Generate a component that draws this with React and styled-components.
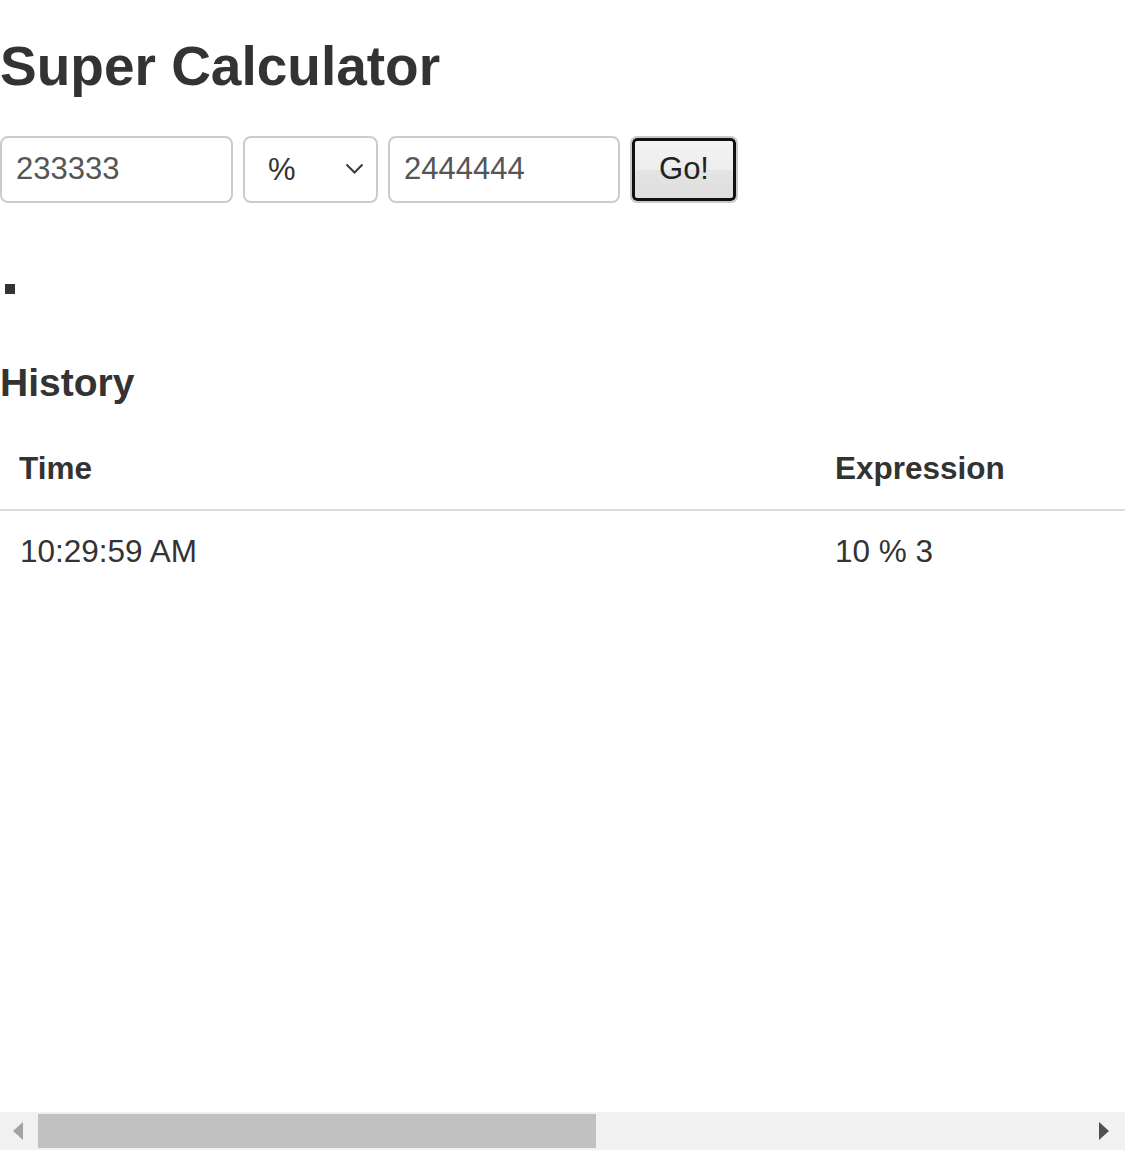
import React from "react";
import styled, { createGlobalStyle } from "styled-components";

const GlobalStyle = createGlobalStyle`
  html, body {
    margin: 0;
    padding: 0;
    background: #fff;
  }
  body {
    font-family: "Liberation Sans", Arial, "Helvetica Neue", sans-serif;
    color: #333;
  }
`;

const Page = styled.div`
  box-sizing: border-box;
  padding-bottom: 40px;
`;

const Title = styled.h1`
  font-size: 55px;
  font-weight: 700;
  line-height: 1.1;
  color: #333;
  margin: 36px 0 39px;
`;

const CalcForm = styled.form`
  display: flex;
  align-items: stretch;
  gap: 10px;
  height: 67px;
`;

const NumberInput = styled.input`
  box-sizing: border-box;
  width: ${(p) => p.$w}px;
  height: 67px;
  margin: 0;
  border: 2px solid #cccccc;
  border-radius: 8px;
  padding: 0 14px;
  font-family: "Liberation Sans", Arial, sans-serif;
  font-size: 31px;
  color: #555;
  background: #fff;
  outline: none;
`;

const SelectWrap = styled.div`
  position: relative;
  width: 135px;
  height: 67px;
`;

const OperatorSelect = styled.select`
  appearance: none;
  -webkit-appearance: none;
  box-sizing: border-box;
  width: 100%;
  height: 100%;
  margin: 0;
  border: 2px solid #cccccc;
  border-radius: 8px;
  padding: 0 0 0 23px;
  font-family: "Liberation Sans", Arial, sans-serif;
  font-size: 31px;
  color: #333;
  background: #fff;
  outline: none;
`;

const Chevron = styled.svg`
  position: absolute;
  left: 102px;
  top: 27px;
  width: 19px;
  height: 11px;
  pointer-events: none;
`;

const GoButton = styled.button`
  box-sizing: border-box;
  width: 108px;
  height: 67px;
  margin: 0;
  border: 2px solid #c9c9c9;
  border-radius: 7px;
  box-shadow: inset 0 0 0 3px #111;
  background: linear-gradient(
    to bottom,
    #f5f5f5 0%,
    #ededed 50%,
    #e4e4e4 50%,
    #dedede 100%
  );
  font-family: "Liberation Sans", Arial, sans-serif;
  font-size: 31px;
  color: #222;
  padding: 0;
  cursor: pointer;
`;

const ResultMark = styled.div`
  width: 10px;
  height: 10px;
  background: #333;
  margin: 81px 0 0 5px;
`;

const HistoryTitle = styled.h3`
  font-size: 39px;
  font-weight: 700;
  line-height: 1.1;
  color: #333;
  margin: 68px 0 24px;
`;

const HistoryTable = styled.table`
  width: 100%;
  table-layout: fixed;
  border-collapse: collapse;
  font-size: 31.5px;
  line-height: 45px;
  color: #333;
`;

const HeadCell = styled.th`
  box-sizing: border-box;
  width: ${(p) => (p.$w ? `${p.$w}px` : "auto")};
  text-align: left;
  font-weight: 700;
  padding: 18px 18px 18px ${(p) => (p.$first ? 19 : 18)}px;
  border-bottom: 2px solid #dddddd;
`;

const Cell = styled.td`
  padding: 18px 18px 18px ${(p) => (p.$first ? 20 : 18)}px;
  text-align: left;
`;

const ScrollBar = styled.div`
  position: fixed;
  left: 0;
  right: 0;
  bottom: 0;
  height: 38px;
  background: #f1f1f1;
  display: flex;
  align-items: stretch;
`;

const ScrollArrow = styled.div`
  width: 38px;
  flex: none;
  display: flex;
  align-items: center;
  justify-content: ${(p) => (p.$side === "left" ? "flex-start" : "flex-end")};
  padding: ${(p) => (p.$side === "left" ? "0 0 0 13px" : "0 16px 0 0")};
  box-sizing: border-box;
`;

const ScrollTrack = styled.div`
  flex: 1;
  padding: 2px 0;
  display: flex;
`;

const ScrollThumb = styled.div`
  width: 558px;
  background: #c1c1c1;
`;

const history = [{ time: "10:29:59 AM", expression: "10 % 3" }];

export default function App() {
  return (
    <Page>
      <GlobalStyle />
      <Title>Super Calculator</Title>
      <CalcForm onSubmit={(e) => e.preventDefault()}>
        <NumberInput $w={233} defaultValue="233333" />
        <SelectWrap>
          <OperatorSelect defaultValue="%">
            <option value="+">+</option>
            <option value="-">-</option>
            <option value="*">*</option>
            <option value="/">/</option>
            <option value="%">%</option>
          </OperatorSelect>
          <Chevron viewBox="0 0 19 11" fill="none">
            <path d="M1.5 1.5 L9.5 9.5 L17.5 1.5" stroke="#3a3a3a" strokeWidth="2" />
          </Chevron>
        </SelectWrap>
        <NumberInput $w={232} defaultValue="2444444" />
        <GoButton type="submit">Go!</GoButton>
      </CalcForm>
      <ResultMark />
      <HistoryTitle>History</HistoryTitle>
      <HistoryTable>
        <thead>
          <tr>
            <HeadCell $w={817} $first>
              Time
            </HeadCell>
            <HeadCell>Expression</HeadCell>
          </tr>
        </thead>
        <tbody>
          {history.map((h) => (
            <tr key={h.time}>
              <Cell $first>{h.time}</Cell>
              <Cell>{h.expression}</Cell>
            </tr>
          ))}
        </tbody>
      </HistoryTable>
      <ScrollBar aria-hidden="true">
        <ScrollArrow $side="left">
          <svg width="10" height="18" viewBox="0 0 10 18">
            <polygon points="10,0 10,18 0,9" fill="#a3a3a3" />
          </svg>
        </ScrollArrow>
        <ScrollTrack>
          <ScrollThumb />
        </ScrollTrack>
        <ScrollArrow $side="right">
          <svg width="10" height="18" viewBox="0 0 10 18">
            <polygon points="0,0 10,9 0,18" fill="#505050" />
          </svg>
        </ScrollArrow>
      </ScrollBar>
    </Page>
  );
}
